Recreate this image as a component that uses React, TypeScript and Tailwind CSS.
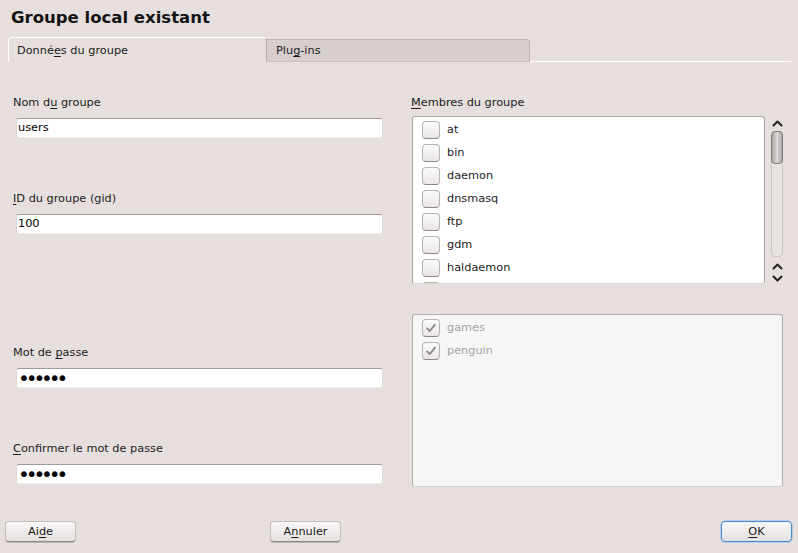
import React from "react";

const Checkbox = ({ checked = false }: { checked?: boolean }) => (
  <div className="w-[18px] h-[18px] shrink-0 rounded-[4px] border border-[#b9b3b1] border-b-[#8f8887] bg-gradient-to-b from-[#fbfbfb] to-[#e9e6e5] flex items-center justify-center">
    {checked && (
      <svg width="12" height="12" viewBox="0 0 12 12">
        <path d="M2.2 6.4 L4.8 9 L9.8 2.8" fill="none" stroke="#8d8989" strokeWidth="1.9" strokeLinecap="round" strokeLinejoin="round" />
      </svg>
    )}
  </div>
);

const Field = ({ label, value, password = false, className = "" }: { label: [string, string, string]; value: string; password?: boolean; className?: string }) => (
  <div className={className}>
    <div className="h-[14px] leading-[14px] whitespace-pre">
      {label[0]}
      <span className="underline underline-offset-[2px]">{label[1]}</span>
      {label[2]}
    </div>
    <div className="mt-[8px] ml-[3px] w-[367px] h-[20px] bg-white rounded-[3px] border-t border-t-[#a29c9a] border-x border-x-[#dcd7d6] border-b border-b-[#efecec] flex items-center pl-[1px]">
      {password ? (
        <span className="text-[20px] leading-none tracking-[-4.1px] text-black -mt-[1px]">••••••</span>
      ) : (
        <span className="leading-[14px] text-black">{value}</span>
      )}
    </div>
  </div>
);

const Chevron = ({ up }: { up: boolean }) => (
  <svg width="11" height="7" viewBox="0 0 11 7">
    <path d={up ? "M1.5 5.5 L5.5 1.5 L9.5 5.5" : "M1.5 1.5 L5.5 5.5 L9.5 1.5"} fill="none" stroke="#222" strokeWidth="2" strokeLinecap="round" strokeLinejoin="round" />
  </svg>
);

const Button = ({ children, primary = false }: { children: React.ReactNode; primary?: boolean }) => (
  <div
    className={
      "w-[71px] h-[21px] rounded-[4px] flex items-center justify-center leading-[14px] text-[#1a1a1a] bg-gradient-to-b from-[#f8f7f7] to-[#e4e0df] " +
      (primary
        ? "border-[1.5px] border-[#4a8ad0] shadow-[0_0_0_0.5px_#8fb8e6]"
        : "border border-[#c2bcbb] border-b-[#8e8786] shadow-[0_1px_0_#bdb6b5]")
    }
  >
    {children}
  </div>
);

export default function App() {
  const members = ["at", "bin", "daemon", "dnsmasq", "ftp", "gdm", "haldaemon"];
  return (
    <div className="w-[798px] h-[553px] bg-[#e6dfdd] font-['DejaVu_Sans',sans-serif] text-[11.3px] text-[#1c1c1c] flex flex-col overflow-hidden">
      <div className="h-[37px] pl-[11px] pt-[7px] text-[16.5px] font-bold leading-[22px] text-[#141414]">
        Groupe local existant
      </div>
      <div className="h-[25px] flex items-end pl-[8px] pr-[7px]">
        <div className="w-[259px] h-[25px] rounded-tl-[4px] rounded-tr-[4px] border-l border-t border-white border-r border-r-[#b8b0ae] bg-[#e6dfdd] pl-[8px] pt-[6px] leading-[14px]">
          Donné<span className="underline underline-offset-[2px]">e</span>s du groupe
        </div>
        <div className="w-[263px] h-[23px] rounded-tr-[4px] border-t border-r border-[#bdb5b3] border-b border-b-[#c9c1bf] bg-[#d7cfcd] pl-[9px] pt-[4px] leading-[14px]">
          Plu<span className="underline underline-offset-[2px]">g</span>-ins
        </div>
        <div className="flex-1 h-[1px] bg-white" />
      </div>
      <div className="h-[426px] flex">
        <div className="w-[411px] pl-[13px] pt-[34px]">
          <Field label={["Nom d", "u", " groupe"]} value="users" />
          <Field className="mt-[54px]" label={["", "I", "D du groupe (gid)"]} value="100" />
          <Field className="mt-[112px]" label={["Mot de ", "p", "asse"]} value="" password />
          <Field className="mt-[54px]" label={["", "C", "onfirmer le mot de passe"]} value="" password />
        </div>
        <div className="w-[372px] pt-[34px]">
          <div className="h-[14px] leading-[14px]">
            <span className="underline underline-offset-[2px]">M</span>embres du groupe
          </div>
          <div className="mt-[6px] flex">
            <div className="ml-[1px] w-[353px] h-[168px] bg-white rounded-[3px] border border-[#aaa4a2] border-b-[#dcd7d6] overflow-hidden pl-[9px] pt-[1px]">
              {members.map((m) => (
                <div key={m} className="h-[23px] flex items-center gap-[7px]">
                  <Checkbox />
                  <span className="leading-[14px]">{m}</span>
                </div>
              ))}
              <div className="h-[23px] flex items-center">
                <Checkbox />
              </div>
            </div>
            <div className="ml-[6px] w-[12px] flex flex-col items-center pt-[4px]">
              <Chevron up />
              <div className="mt-[4px] w-[12px] h-[126px] rounded-[4px] border border-[#cbc5c3] bg-[#e9e3e1]">
                <div className="-m-px w-[12px] h-[33px] rounded-[4px] border border-[#7f7a79] bg-gradient-to-r from-[#a9a5a4] via-[#dedad9] to-[#a9a5a4]" />
              </div>
              <div className="mt-[6px]"><Chevron up /></div>
              <div className="mt-[5px]"><Chevron up={false} /></div>
            </div>
          </div>
          <div className="mt-[30px] ml-[1px] w-[371px] h-[173px] bg-[#f6f6f6] rounded-[3px] border border-[#b3adab] border-b-[#d8d3d2] pl-[9px] pt-[1px]">
            {["games", "penguin"].map((m) => (
              <div key={m} className="h-[23px] flex items-center gap-[7px]">
                <Checkbox checked />
                <span className="leading-[14px] text-[#a6a2a2]">{m}</span>
              </div>
            ))}
          </div>
        </div>
      </div>
      <div className="mt-[33px] flex pl-[5px] pr-[6px]">
        <Button>
          <span>
            Ai<span className="underline underline-offset-[2px]">d</span>e
          </span>
        </Button>
        <div className="ml-[194px]">
          <Button>
            <span>
              A<span className="underline underline-offset-[2px]">n</span>nuler
            </span>
          </Button>
        </div>
        <div className="ml-auto">
          <Button primary>
            <span>
              <span className="underline underline-offset-[2px]">O</span>K
            </span>
          </Button>
        </div>
      </div>
    </div>
  );
}
